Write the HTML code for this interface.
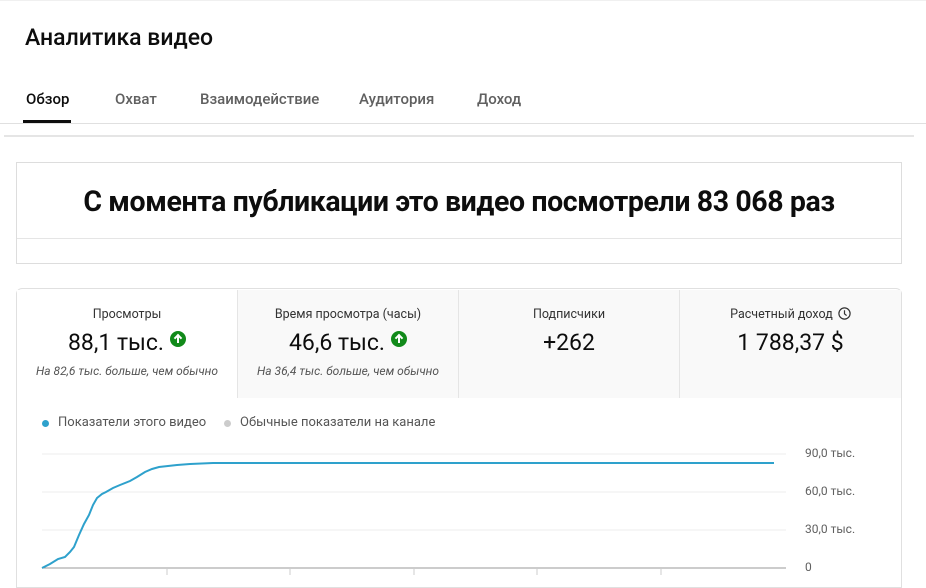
<!DOCTYPE html>
<html><head><meta charset="utf-8"><style>
*{margin:0;padding:0;box-sizing:border-box}
body{width:926px;height:575px;overflow:hidden;background:#fff;font-family:"Roboto","Liberation Sans",sans-serif;color:#0d0d0d;position:relative}
.abs{position:absolute}
.tab{position:absolute;top:90px;font-size:15px;color:#606060;font-weight:500}
.cell{position:absolute;top:290px;height:108px;width:221px;text-align:center;background:#f9f9f9;border-right:1px solid #e5e5e5}
.cell .t{margin-top:17px;font-size:12.5px;color:#333}
.cell .v{margin-top:7px;font-size:23px;color:#0d0d0d}
.cell .s{margin-top:8px;font-size:12px;font-style:italic;color:#555}
.up{display:inline-block;width:16px;height:16px;border-radius:50%;background:#118a1a;vertical-align:3px;margin-left:6px;position:relative}
.up:after{content:"";position:absolute;left:7px;top:4px;width:2px;height:8px;background:#fff}
.up:before{content:"";position:absolute;left:5px;top:4px;width:4px;height:4px;border-left:2px solid #fff;border-top:2px solid #fff;transform:rotate(45deg)}
.yl{position:absolute;left:805px;font-size:12px;color:#606060}
</style></head><body>
<div class="abs" style="left:0;top:0;width:926px;height:1px;background:#f0f0f0"></div>
<div class="abs" style="left:25px;top:24px;font-size:23px;font-weight:500">Аналитика видео</div>
<div class="tab" style="left:26px;color:#0d0d0d">Обзор</div>
<div class="tab" style="left:115px">Охват</div>
<div class="tab" style="left:200px">Взаимодействие</div>
<div class="tab" style="left:359px">Аудитория</div>
<div class="tab" style="left:477px">Доход</div>
<div class="abs" style="left:23px;top:120px;width:48px;height:3px;background:#0d0d0d"></div>
<div class="abs" style="left:0;top:123px;width:926px;height:1px;background:#e0e0e0"></div>
<div class="abs" style="left:4px;top:135px;width:910px;height:2px;background:#e5e5e5"></div>
<div class="abs" style="left:16px;top:162px;width:886px;height:102px;border:1px solid #ddd"></div>
<div class="abs" style="left:17px;top:238px;width:884px;height:1px;background:#e5e5e5"></div>
<div class="abs" style="left:16px;top:185px;width:886px;text-align:center;font-size:28.5px;font-weight:bold;letter-spacing:-0.4px">С момента публикации это видео посмотрели 83 068 раз</div>
<div class="abs" style="left:16px;top:288px;width:886px;height:300px;border:1px solid #e0e0e0;border-radius:6px 6px 0 0"></div>
<div class="cell" style="left:17px;background:#fff"><div class="t">Просмотры</div><div class="v">88,1 тыс.<span class="up"></span></div><div class="s">На 82,6 тыс. больше, чем обычно</div></div>
<div class="cell" style="left:238px"><div class="t">Время просмотра (часы)</div><div class="v">46,6 тыс.<span class="up"></span></div><div class="s">На 36,4 тыс. больше, чем обычно</div></div>
<div class="cell" style="left:459px"><div class="t">Подписчики</div><div class="v">+262</div></div>
<div class="cell" style="left:680px;width:221px;border-right:none"><div class="t">Расчетный доход <svg width="13" height="13" viewBox="0 0 13 13" style="vertical-align:-2px;margin-left:2px"><circle cx="6.5" cy="6.5" r="5.6" fill="none" stroke="#333" stroke-width="1.2"/><path d="M6.5 3.2V6.8L8.6 8.6" fill="none" stroke="#333" stroke-width="1.2"/></svg></div><div class="v">1 788,37 $</div></div>
<div class="abs" style="left:42px;top:420px;width:7px;height:7px;border-radius:50%;background:#2ea1cc"></div>
<div class="abs" style="left:58px;top:415px;font-size:13px;color:#555">Показатели этого видео</div>
<div class="abs" style="left:224px;top:420px;width:7px;height:7px;border-radius:50%;background:#ccc"></div>
<div class="abs" style="left:240px;top:415px;font-size:13px;color:#555">Обычные показатели на канале</div>
<svg class="abs" style="left:0;top:0" width="926" height="575">
<g stroke="#ececec" stroke-width="1"><line x1="42" y1="454" x2="786" y2="454"/><line x1="42" y1="492" x2="786" y2="492"/><line x1="42" y1="530" x2="786" y2="530"/></g>
<line x1="42" y1="568" x2="786" y2="568" stroke="#999"/>
<g stroke="#ccc"><line x1="167" y1="568" x2="167" y2="575"/><line x1="290" y1="568" x2="290" y2="575"/><line x1="414" y1="568" x2="414" y2="575"/><line x1="537" y1="568" x2="537" y2="575"/><line x1="661" y1="568" x2="661" y2="575"/></g>
<polyline fill="none" stroke="#2ea1cc" stroke-width="2" points="42,568 50,564 58,559 65,557 70,552 74,547 79,535 84,524 89,515 93,505 97,498 102,494 106,492 113,488 120,485 130,481 137,477 145,472 152,469 159,467 168,466 177,465 190,464 213,463 774,463"/>
</svg>
<div class="yl" style="top:446px">90,0 тыс.</div>
<div class="yl" style="top:484px">60,0 тыс.</div>
<div class="yl" style="top:522px">30,0 тыс.</div>
<div class="yl" style="top:560px">0</div>
</body></html>
